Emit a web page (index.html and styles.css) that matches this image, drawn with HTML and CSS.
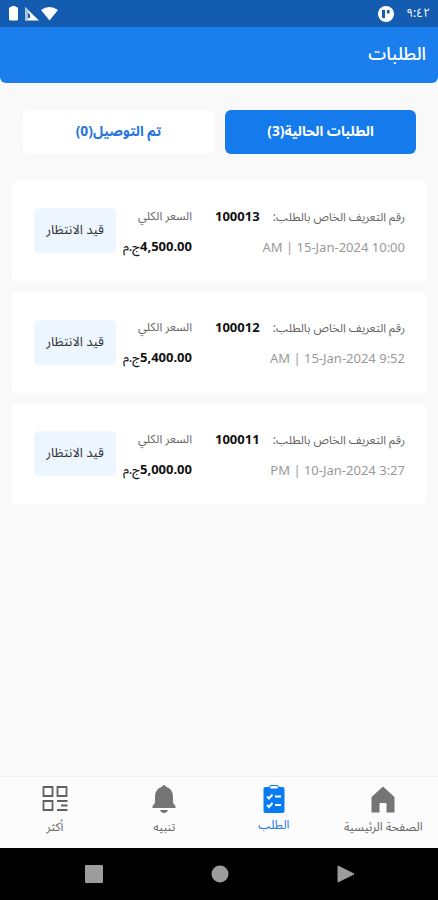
FILE: index.html
```
<!DOCTYPE html>
<html lang="ar" dir="rtl">
<head>
    <meta charset="UTF-8">
    <meta name="viewport" content="width=device-width, initial-scale=1.0">
    <title>الطلبات</title>
    <link rel="stylesheet" href="styles.css">
</head>
<body>
    <div class="status-bar">
        <span class="clock">٩:٤٢</span>
        <svg class="app-dot" width="16" height="16" viewBox="0 0 16 16">
            <circle cx="8" cy="8" r="8" fill="#fff"/>
            <path d="M4 4h3v8H4zM9 4h2.500v3.500H9z" fill="#145cb0"/>
        </svg>
        <svg class="status-icons" width="50" height="16" viewBox="0 0 50 16">
            <path d="M2.500 1h1V0h4v1h1Q10 1 10 2.500V13q0 1.500-1.500 1.500h-6Q1 14.500 1 13V2.500Q1 1 2.500 1z" fill="#fff"/>
            <path d="M17 1v13.500h14z" fill="#fff"/>
            <path d="M17 1v13h3V4z" fill="#a9c4e6"/>
            <path d="M20 6.500l2 2V12h-2z" fill="#145cb0"/>
            <path d="M33 4q8.500-6 17 0l-8.500 10.500z" fill="#fff"/>
        </svg>
    </div>

    <header>
        <h1>الطلبات</h1>
    </header>

    <main>
        <div class="tabs">
            <button class="tab active">الطلبات الحالية(3)</button>
            <button class="tab">تم التوصيل(0)</button>
        </div>

        <section class="orders">
            <div class="order">
                <div class="info">
                    <p class="order-id"><span class="label">رقم التعريف الخاص بالطلب:</span> <b>100013</b></p>
                    <p class="date">10:00 AM | 15-Jan-2024</p>
                </div>
                <div class="total">
                    <p class="label">السعر الكلي</p>
                    <p class="price">4,500.00<span class="currency">ج.م</span></p>
                </div>
                <span class="state">قيد الانتظار</span>
            </div>
            <div class="order">
                <div class="info">
                    <p class="order-id"><span class="label">رقم التعريف الخاص بالطلب:</span> <b>100012</b></p>
                    <p class="date">9:52 AM | 15-Jan-2024</p>
                </div>
                <div class="total">
                    <p class="label">السعر الكلي</p>
                    <p class="price">5,400.00<span class="currency">ج.م</span></p>
                </div>
                <span class="state">قيد الانتظار</span>
            </div>
            <div class="order">
                <div class="info">
                    <p class="order-id"><span class="label">رقم التعريف الخاص بالطلب:</span> <b>100011</b></p>
                    <p class="date">3:27 PM | 10-Jan-2024</p>
                </div>
                <div class="total">
                    <p class="label">السعر الكلي</p>
                    <p class="price">5,000.00<span class="currency">ج.م</span></p>
                </div>
                <span class="state">قيد الانتظار</span>
            </div>
        </section>
    </main>

    <nav>
        <a class="nav-item">
            <svg width="30" height="30" viewBox="0 0 30 30">
                <path d="M15 1.500L26.500 12v15.500h-8V19q0-1-1-1h-5q-1 0-1 1v8.500h-8V12z" fill="#757575"/>
            </svg>
            <span>الصفحة الرئيسية</span>
        </a>
        <a class="nav-item current">
            <svg width="30" height="30" viewBox="0 0 30 30">
                <rect x="4.500" y="2" width="21" height="26" rx="2" fill="#087cf4"/>
                <rect x="10.500" y="0.500" width="9" height="3.500" rx="1.500" fill="#fff" stroke="#087cf4"/>
                <path d="M8 11.500l2 2 3.500-4M8 20l2 2 3.500-4M16 11.500h6M16 20h6" fill="none" stroke="#fff" stroke-width="1.900"/>
            </svg>
            <span>الطلب</span>
        </a>
        <a class="nav-item">
            <svg width="30" height="30" viewBox="0 0 30 30">
                <path d="M15 0q1.500 0 2 1.800 6.500 2 7 9.200v6q.3 2 2.500 4v2h-23v-2q2.200-2 2.500-4v-6q.5-7.200 7-9.200Q13.500 0 15 0z" fill="#757575"/>
                <path d="M11 25h8q-1 3-4 3t-4-3z" fill="#757575"/>
            </svg>
            <span>تنبيه</span>
        </a>
        <a class="nav-item">
            <svg width="30" height="30" viewBox="0 0 30 30">
                <path d="M3.500 2h9v9h-9zM17.500 2h9v9h-9zM3.500 16h9v9h-9zM17 16h10.500M21 20.500h6.500M17 25h10.500" fill="none" stroke="#616161" stroke-width="1.800"/>
            </svg>
            <span>أكثر</span>
        </a>
    </nav>

    <footer>
        <svg width="18" height="18" viewBox="0 0 18 18"><path d="M1 1v16l16-8z" fill="#9c9c9c" stroke="#9c9c9c" stroke-linejoin="round"/></svg>
        <svg width="18" height="18" viewBox="0 0 18 18"><circle cx="9" cy="9" r="8.500" fill="#9c9c9c"/></svg>
        <svg width="18" height="18" viewBox="0 0 18 18"><rect width="18" height="18" rx="1" fill="#9c9c9c"/></svg>
    </footer>
</body>
</html>
```

FILE: styles.css
```
* {
    box-sizing: border-box;
}

body {
    margin: 0;
    height: 900px;
    display: flex;
    flex-direction: column;
    overflow: hidden;
    background: #f9f9f9;
    font-family: "Noto Sans", "Noto Sans Arabic", "DejaVu Sans", sans-serif;
    font-size: 13px;
    color: #111;
}

p, h1 {
    margin: 0;
}

.status-bar {
    height: 27px;
    padding: 0 8px;
    display: flex;
    align-items: center;
    background: #145cb0;
    color: #fff;
}

.clock {
    width: 26px;
    font-size: 12px;
    white-space: nowrap;
}

.app-dot {
    margin-right: 10px;
}

.status-icons {
    margin-right: auto;
}

header {
    height: 56px;
    padding: 0 12px 2px;
    display: flex;
    align-items: center;
    background: #1b7eed;
    border-radius: 0 0 6px 6px;
    color: #fff;
}

h1 {
    font-size: 18px;
    font-weight: 500;
}

main {
    flex: 1;
    padding: 27px 11px 0 12px;
}

.tabs {
    display: flex;
    gap: 11px;
    padding: 0 11px;
}

.tab {
    width: 191px;
    height: 44px;
    padding: 0 0 2px;
    border: none;
    border-radius: 6px;
    background: #fff;
    color: #2675dc;
    font: bold 13.8px "Noto Sans", "Noto Sans Arabic", "DejaVu Sans", sans-serif;
}

.tab.active {
    background: #157bed;
    color: #fff;
}

.orders {
    display: flex;
    flex-direction: column;
    gap: 11px;
    margin-top: 26.5px;
}

.order {
    height: 100.5px;
    padding: 0 22px;
    display: flex;
    align-items: center;
    background: #fff;
    border-radius: 5px;
    white-space: nowrap;
}

.info {
    width: 190px;
    padding-top: 2px;
}

.order-id {
    display: flex;
    justify-content: space-between;
}

.info p, .total p {
    height: 31px;
    line-height: 31px;
}

.label {
    color: #666;
    font-size: 11.8px;
}

.date {
    color: #999;
}

.total {
    width: 76px;
    margin-right: 23px;
}

.price {
    font-weight: bold;
}

.currency {
    font-size: 12px;
    font-weight: 500;
}

.state {
    width: 82px;
    height: 45px;
    line-height: 43px;
    background: #edf5ff;
    border-radius: 5px;
    color: #333;
    text-align: center;
}

nav {
    height: 72px;
    display: flex;
    background: #fcfcfc;
    border-top: 1px solid #f0f0f0;
}

.nav-item {
    width: 25%;
    padding-top: 8px;
    display: flex;
    flex-direction: column;
    align-items: center;
    color: #666;
    font-size: 12px;
    white-space: nowrap;
}

.current {
    color: #2878e6;
}

.current span {
    margin-top: -2px;
}

footer {
    height: 52px;
    padding: 0 83px 0 85px;
    display: flex;
    align-items: center;
    justify-content: space-between;
    background: #000;
}
```
